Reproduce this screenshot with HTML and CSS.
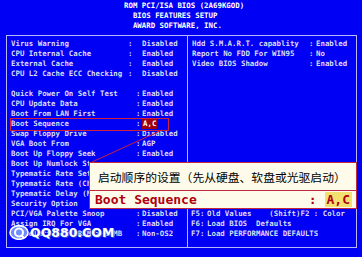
FILE: index.html
```html
<!DOCTYPE html>
<html lang="zh-CN">
<head>
    <meta charset="UTF-8">
    <meta name="viewport" content="width=device-width, initial-scale=1.0">
    <title>BIOS FEATURES SETUP</title>
    <link rel="stylesheet" href="styles.css">
</head>
<body>
    <div class="screen">
        <!-- Header -->
        <pre class="title">ROM PCI/ISA BIOS (2A69KGOD)
  BIOS FEATURES SETUP
  AWARD SOFTWARE, INC.</pre>

        <!-- Main frame -->
        <div class="frame">
            <div class="col col-left">
                <div class="row wide"><span>Virus Warning</span><span>:</span><span>Disabled</span></div>
                <div class="row wide"><span>CPU Internal Cache</span><span>:</span><span>Enabled</span></div>
                <div class="row wide"><span>External Cache</span><span>:</span><span>Enabled</span></div>
                <div class="row wide"><span>CPU L2 Cache ECC Checking</span><span>:</span><span>Disabled</span></div>
                <div class="row blank"></div>
                <div class="row"><span>Quick Power On Self Test</span><span>:</span><span>Enabled</span></div>
                <div class="row"><span>CPU Update Data</span><span>:</span><span>Enabled</span></div>
                <div class="row"><span>Boot From LAN First</span><span>:</span><span>Enabled</span></div>
                <div class="row marked"><span>Boot Sequence</span><span>:</span><span class="sel">A,C</span></div>
                <div class="row"><span>Swap Floppy Drive</span><span>:</span><span>Disabled</span></div>
                <div class="row"><span>VGA Boot From</span><span>:</span><span>AGP</span></div>
                <div class="row"><span>Boot Up Floppy Seek</span><span>:</span><span>Enabled</span></div>
                <div class="row under"><span>Boot Up Numlock Status</span></div>
                <div class="row under"><span>Typematic Rate Setting</span></div>
                <div class="row under"><span>Typematic Rate (Chars/Sec)</span></div>
                <div class="row under"><span>Typematic Delay (Msec)</span></div>
                <div class="row under"><span>Security Option</span></div>
                <div class="row"><span>PCI/VGA Palette Snoop</span><span>:</span><span>Disabled</span></div>
                <div class="row"><span>Assign IRQ For VGA</span><span>:</span><span>Enabled</span></div>
                <div class="row"><span>OS Select For DRAM &gt; 64MB</span><span>:</span><span>Non-OS2</span></div>
            </div>
            <div class="col col-right">
                <div class="opts">
                    <div class="row"><span>Hdd S.M.A.R.T. capablity</span><span>:</span><span>Enabled</span></div>
                    <div class="row"><span>Report No FDD For WIN95</span><span>:</span><span>No</span></div>
                    <div class="row"><span>Video BIOS Shadow</span><span>:</span><span>Enabled</span></div>
                </div>
                <div class="help">
                    <div class="key"><span>F5</span><span>:</span><span>Old Values    (Shift)F2 : Color</span></div>
                    <div class="key"><span>F6</span><span>:</span><span>Load BIOS  Defaults</span></div>
                    <div class="key"><span>F7</span><span>:</span><span>Load PERFORMANCE DEFAULTS</span></div>
                </div>
            </div>
        </div>

        <!-- Callout -->
        <svg class="pointer" width="362" height="257" viewBox="0 0 362 257">
            <line x1="162" y1="130" x2="92" y2="162" stroke="#d0203c" stroke-width="1"/>
        </svg>
        <div class="callout">
            <div class="callout-text">启动顺序的设置（先从硬盘、软盘或光驱启动）</div>
            <div class="callout-item"><span>Boot Sequence</span><span>: <b>A,C</b></span></div>
        </div>

        <!-- Watermark -->
        <div class="mark">
            <svg width="20" height="15" viewBox="0 0 20 15">
                <ellipse cx="10" cy="7.5" rx="9" ry="6.8" fill="#6f8cff" stroke="#ffffff" stroke-width="1.6"/>
                <ellipse cx="10" cy="7.5" rx="4" ry="4" fill="none" stroke="#ffffff" stroke-width="2"/>
                <line x1="12" y1="10" x2="15" y2="13" stroke="#ffffff" stroke-width="2"/>
            </svg>
            <span>QQ880.COM</span>
        </div>
    </div>
</body>
</html>
```

FILE: styles.css
```css
body {
    margin: 0;
    background: #0000f4;
    font-family: "DejaVu Sans Mono", monospace;
    font-weight: bold;
    font-size: 7.4px;
    line-height: 10px;
    color: #dcdcf6;
}
.screen {
    position: relative;
    width: 362px;
    height: 257px;
    overflow: hidden;
}
.title {
    margin: 0;
    height: 35px;
    box-sizing: border-box;
    padding: 1px 0 0 124px;
    font: inherit;
    color: #ffffff;
}
.frame {
    display: flex;
    margin-left: 6px;
    width: 351px;
    height: 213px;
    box-sizing: border-box;
    border: 1px solid #b8b8f4;
}
.col-left {
    width: 180px;
    padding: 3px 0 0 4px;
    box-sizing: border-box;
}
.col-right {
    flex: 1;
    display: flex;
    flex-direction: column;
    border-left: 1px solid #b8b8f4;
    padding-top: 3px;
}
.row {
    display: grid;
    grid-template-columns: 125px 6px auto;
    height: 10px;
    white-space: pre;
}
.row.wide {
    grid-template-columns: 117px 14px auto;
}
.row.under {
    width: 78px;
    overflow: hidden;
}
.row.marked {
    position: relative;
}
.row.marked::after {
    content: "";
    position: absolute;
    left: -1px;
    top: -1px;
    width: 157px;
    height: 11px;
    border: 1px solid #d0203c;
}
.sel {
    justify-self: start;
    background: #a00010;
    color: #ffffff;
    padding: 0 1px;
}
.opts {
    padding-left: 4px;
}
.opts .row {
    grid-template-columns: 117px 7px auto;
}
.help {
    margin-top: auto;
    border-top: 1px solid #b8b8f4;
    padding: 22px 0 8px 3px;
}
.key {
    display: grid;
    grid-template-columns: 9px 7px auto;
    height: 10px;
    white-space: pre;
}
/* callout */
.pointer {
    position: absolute;
    left: 0;
    top: 0;
}
.callout {
    position: absolute;
    left: 89px;
    top: 162px;
    width: 268px;
    height: 47px;
    box-sizing: border-box;
    border: 1px solid #c0283c;
    background: #fffbea;
}
.callout-text {
    height: 27px;
    border-bottom: 1px solid #c0283c;
    padding-left: 8px;
    font-family: "Noto Sans CJK SC", sans-serif;
    font-weight: normal;
    font-size: 11.8px;
    line-height: 27px;
    color: #000000;
    white-space: nowrap;
}
.callout-item {
    display: flex;
    justify-content: space-between;
    align-items: center;
    height: 18px;
    padding: 0 4px 0 5px;
    font-size: 13px;
    color: #b00010;
    white-space: pre;
}
.callout-item b {
    background: #f4e070;
    padding: 0 2px;
}
/* watermark */
.mark {
    position: absolute;
    left: 9px;
    top: 225px;
    display: flex;
    align-items: center;
    gap: 1px;
    font-family: "DejaVu Sans", sans-serif;
    font-size: 12.5px;
    line-height: 15px;
    color: #ffffff;
    text-shadow: 0 0 1px #3050d0, 1px 1px 0 #3050d0;
}
```
